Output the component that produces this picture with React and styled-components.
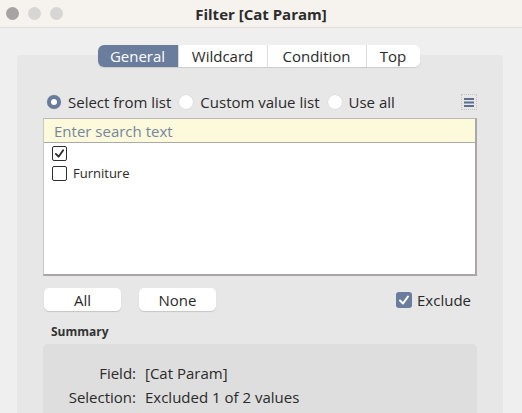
import styled, { createGlobalStyle } from 'styled-components';

const GlobalStyle = createGlobalStyle`
  html, body {
    margin: 0;
    padding: 0;
    background: #efefef;
  }
  body {
    font-family: "Open Sans", "DejaVu Sans", sans-serif;
    color: #2a2a2a;
  }
`;

const Window = styled.div`
  width: 522px;
  height: 413px;
  overflow: hidden;
  background: #efefef;
  display: flex;
  flex-direction: column;
`;

const TitleBar = styled.div`
  height: 27px;
  flex: none;
  background: #f6f3ef;
  border-bottom: 1px solid #e2dedb;
  display: flex;
  align-items: center;
  position: relative;
`;

const Lights = styled.div`
  display: flex;
  gap: 9px;
  padding-left: 6px;
`;

const Light = styled.span`
  width: 13px;
  height: 13px;
  border-radius: 50%;
  background: ${(p) => (p.$active ? '#a8a3a3' : '#d8d6d4')};
`;

const Title = styled.div`
  position: absolute;
  left: 0;
  right: 0;
  text-align: center;
  font-weight: 700;
  font-size: 15px;
  color: #2c2c2c;
  pointer-events: none;
`;

const Body = styled.div`
  flex: 1;
  padding: 17px 19px 0 17px;
  display: flex;
  flex-direction: column;
`;

const TabBar = styled.div`
  align-self: center;
  display: flex;
  height: 22px;
  margin-left: -3px;
  background: #fff;
  border-radius: 6px;
  box-shadow: 0 1px 1px rgba(0, 0, 0, 0.12);
  position: relative;
  z-index: 1;
  overflow: hidden;
`;

const Tab = styled.div`
  width: ${(p) => p.$w}px;
  display: flex;
  align-items: center;
  justify-content: center;
  font-size: 15px;
  background: ${(p) => (p.$selected ? '#6a7d9c' : '#fff')};
  color: ${(p) => (p.$selected ? '#fff' : '#2a2a2a')};
  & + & {
    border-left: 1px solid #dcdcdc;
  }
`;

const Panel = styled.div`
  flex: 1;
  margin-top: -12px;
  background: #e7e7e7;
  border-radius: 4px 4px 0 0;
  padding: 34px 26px 0 26px;
  display: flex;
  flex-direction: column;
`;

const RadioRow = styled.div`
  display: flex;
  align-items: center;
  height: 26px;
  padding-left: 4px;
`;

const RadioItem = styled.label`
  display: flex;
  align-items: center;
  gap: 7px;
  font-size: 15px;
  margin-right: 8px;
`;

const Radio = styled.span`
  width: 14px;
  height: 14px;
  border-radius: 50%;
  box-sizing: border-box;
  background: #fff;
  border: ${(p) => (p.$on ? '4px solid #687b9b' : 'none')};
  box-shadow: 0 0 0 0.5px rgba(0, 0, 0, 0.08);
`;

const MenuButton = styled.div`
  margin-left: auto;
  width: 16px;
  height: 16px;
  box-sizing: border-box;
  border: 1px dotted #c4c4c4;
  display: flex;
  align-items: center;
  justify-content: center;
`;

const ListBox = styled.div`
  margin-top: 3px;
  height: 158px;
  box-sizing: border-box;
  background: #fff;
  border-top: 1px solid #b9b9b9;
  border-left: 1px solid #c8c8c8;
  border-right: 2px solid #aaa6a6;
  border-bottom: 2px solid #aaa6a6;
  display: flex;
  flex-direction: column;
`;

const Search = styled.div`
  height: 23px;
  flex: none;
  background: #fdf9db;
  border-bottom: 1px solid #a9a9a9;
  display: flex;
  align-items: center;
  padding-left: 10px;
  font-size: 15px;
  color: #7586a0;
`;

const Items = styled.div`
  padding: 2px 0 0 8px;
  display: flex;
  flex-direction: column;
  gap: 4px;
`;

const ItemRow = styled.div`
  display: flex;
  align-items: center;
  gap: 6px;
  height: 16px;
  font-size: 13px;
`;

const Box = styled.span`
  width: 15px;
  height: 15px;
  box-sizing: border-box;
  border: 1.5px solid #2f2f2f;
  border-radius: 2px;
  display: flex;
  align-items: center;
  justify-content: center;
  background: #fff;
`;

const ButtonRow = styled.div`
  display: flex;
  align-items: center;
  margin-top: 12px;
  padding-left: 1px;
`;

const Button = styled.div`
  width: 77px;
  height: 23px;
  background: #fff;
  border-radius: 5px;
  box-shadow: 0 1px 1px rgba(0, 0, 0, 0.15);
  display: flex;
  align-items: center;
  justify-content: center;
  font-size: 15px;
  margin-right: 18px;
`;

const Exclude = styled.label`
  margin-left: auto;
  display: flex;
  align-items: center;
  gap: 5px;
  font-size: 15px;
  margin-right: 6px;
`;

const BlueBox = styled.span`
  width: 16px;
  height: 16px;
  border-radius: 3px;
  background: #6a7d9c;
  display: flex;
  align-items: center;
  justify-content: center;
`;

const SummaryLabel = styled.div`
  margin-top: 13px;
  padding-left: 8px;
  font-size: 12px;
  line-height: 16px;
  font-weight: 700;
  color: #333;
`;

const SummaryBox = styled.div`
  margin-top: 4px;
  flex: 1;
  background: #dedede;
  border-radius: 5px 5px 0 0;
  padding-top: 19px;
  display: grid;
  grid-template-columns: 93px 1fr;
  column-gap: 9px;
  row-gap: 4px;
  align-content: start;
  font-size: 15px;
  line-height: 20px;
`;

const Key = styled.div`
  text-align: right;
`;

const Check = ({ color = '#2b2b2b', size = 11 }) => (
  <svg width={size} height={size} viewBox="0 0 12 12">
    <path d="M2 6.5 L5 9.5 L10 2.5" fill="none" stroke={color} strokeWidth="2" strokeLinecap="round" strokeLinejoin="round" />
  </svg>
);

const MenuIcon = () => (
  <svg width="10" height="11" viewBox="0 0 10 11">
    <rect x="0" y="1" width="10" height="2" fill="#5d6f8e" />
    <rect x="0" y="4.5" width="10" height="2" fill="#5d6f8e" />
    <rect x="0" y="8" width="10" height="2" fill="#5d6f8e" />
  </svg>
);

export default function App() {
  return (
    <Window>
      <GlobalStyle />
      <TitleBar>
        <Lights>
          <Light $active />
          <Light />
          <Light />
        </Lights>
        <Title>Filter [Cat Param]</Title>
      </TitleBar>
      <Body>
        <TabBar>
          <Tab $w={80} $selected>General</Tab>
          <Tab $w={88}>Wildcard</Tab>
          <Tab $w={98}>Condition</Tab>
          <Tab $w={53}>Top</Tab>
        </TabBar>
        <Panel>
          <RadioRow>
            <RadioItem><Radio $on />Select from list</RadioItem>
            <RadioItem><Radio />Custom value list</RadioItem>
            <RadioItem><Radio />Use all</RadioItem>
            <MenuButton><MenuIcon /></MenuButton>
          </RadioRow>
          <ListBox>
            <Search>Enter search text</Search>
            <Items>
              <ItemRow><Box><Check /></Box></ItemRow>
              <ItemRow><Box />Furniture</ItemRow>
            </Items>
          </ListBox>
          <ButtonRow>
            <Button>All</Button>
            <Button>None</Button>
            <Exclude><BlueBox><Check color="#fff" size={12} /></BlueBox>Exclude</Exclude>
          </ButtonRow>
          <SummaryLabel>Summary</SummaryLabel>
          <SummaryBox>
            <Key>Field:</Key>
            <div>[Cat Param]</div>
            <Key>Selection:</Key>
            <div>Excluded 1 of 2 values</div>
          </SummaryBox>
        </Panel>
      </Body>
    </Window>
  );
}
